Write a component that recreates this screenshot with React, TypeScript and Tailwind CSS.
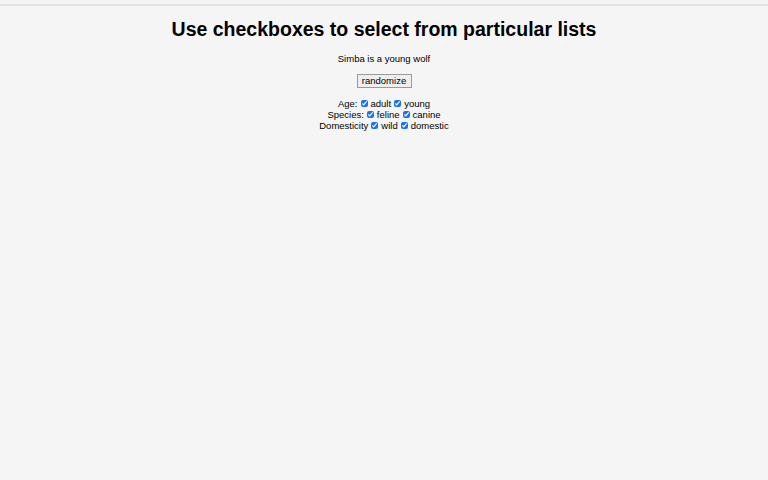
import { useState } from "react";

const groups: [string, string[]][] = [
  ["Age:", ["adult", "young"]],
  ["Species:", ["feline", "canine"]],
  ["Domesticity", ["wild", "domestic"]],
];

export default function App() {
  const [checked, setChecked] = useState<Record<string, boolean>>({
    adult: true,
    young: true,
    feline: true,
    canine: true,
    wild: true,
    domestic: true,
  });

  return (
    <div className="min-h-[480px] w-full bg-[#f5f5f5] font-['Liberation_Sans',Arial,sans-serif] text-black">
      <div className="h-[4px]" />
      <div className="h-[2px] bg-[#e2e2e2]" />
      <div className="flex flex-col items-center">
        <h1 className="mt-[11px] text-[19.5px] font-bold leading-[24px]">
          Use checkboxes to select from particular lists
        </h1>
        <p className="mt-[12px] text-[9.5px] leading-[12px]">Simba is a young wolf</p>
        <button className="mt-[9px] h-[14px] w-[55px] border border-[#9a9a9a] bg-[#efefef] text-[9.5px] leading-[12px]">
          randomize
        </button>
        <div className="mt-[10px] flex flex-col items-center text-[9.5px] leading-[11px]">
          {groups.map(([label, opts]) => (
            <div key={label} className="flex items-center">
              <span>{label}</span>
              {opts.map((o) => (
                <label key={o} className="flex items-center">
                  <input
                    type="checkbox"
                    checked={checked[o]}
                    onChange={() => setChecked({ ...checked, [o]: !checked[o] })}
                    className="mx-[3px] h-[7px] w-[7px] accent-[#1a73e8]"
                  />
                  <span>{o}</span>
                </label>
              ))}
            </div>
          ))}
        </div>
      </div>
    </div>
  );
}
